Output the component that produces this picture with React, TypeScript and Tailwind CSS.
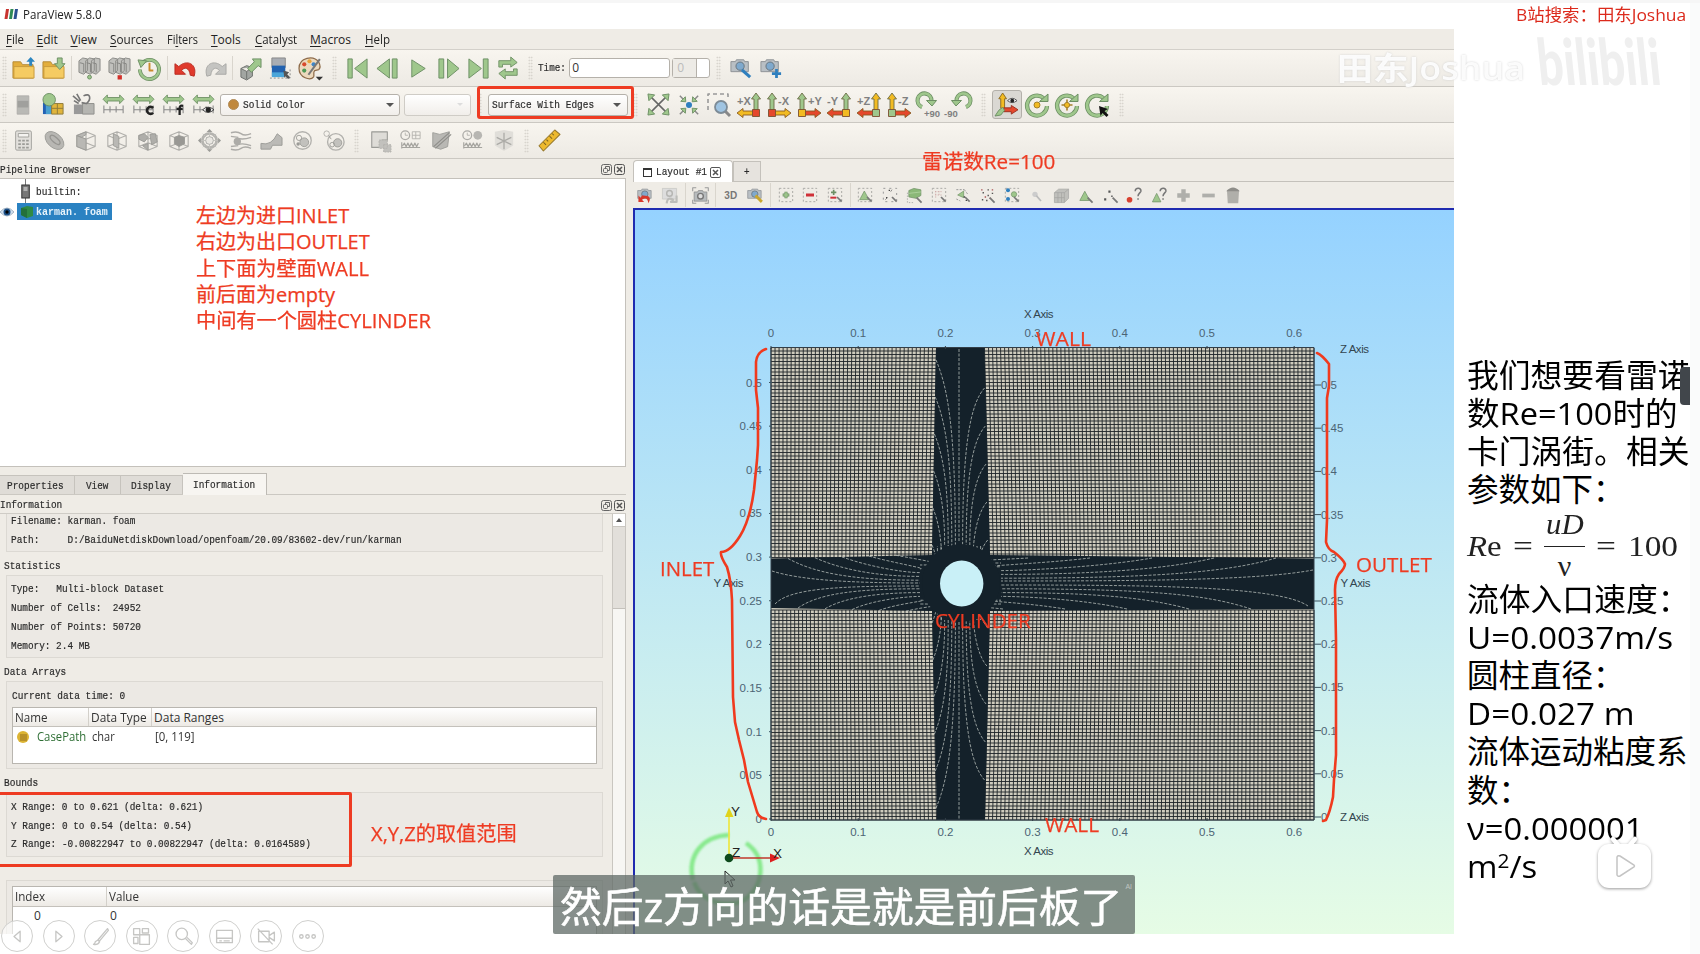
import React, { useLayoutEffect, useRef, useState } from "react";

const SANS = "font-['Open_Sans','Noto_Sans_CJK_SC',sans-serif]";
const MONO = "font-['Liberation_Mono','Noto_Sans_CJK_SC',monospace]";

/* Text squeezed or stretched horizontally to a given width. */
function Fit({ w, className = "", children }: { w: number; className?: string; children: React.ReactNode }) {
  const ref = useRef<HTMLSpanElement>(null);
  const [s, setS] = useState(1);
  useLayoutEffect(() => {
    if (ref.current) setS(w / ref.current.offsetWidth);
  }, [w]);
  return (
    <span className={"inline-block whitespace-pre " + className} style={{ width: w }}>
      <span ref={ref} className="inline-block origin-left" style={{ transform: `scaleX(${s})` }}>
        {children}
      </span>
    </span>
  );
}

function M({ children, className = "" }: { children: string; className?: string }) {
  return (
    <Fit w={children.length * 5.66} className={MONO + " text-[11.5px] leading-[14px] text-[#2a2a2a] [-webkit-text-stroke:0.2px_#2a2a2a] " + className}>
      {children}
    </Fit>
  );
}

function Ic({ children, w = "w-[30px]", s = 23 }: { children: React.ReactNode; w?: string; s?: number }) {
  return (
    <span className={"flex shrink-0 items-center justify-center " + w}>
      <svg className="overflow-visible" width={s} height={s} viewBox="0 0 24 24" fill="none" strokeLinejoin="round">
        {children}
      </svg>
    </span>
  );
}

function Grip({ w = "w-4" }: { w?: string }) {
  return (
    <span className={"flex shrink-0 items-center justify-center " + w}>
      <span className="h-6 w-[5px] bg-[radial-gradient(#d2cec7_0.7px,transparent_0.9px)] bg-[size:2.5px_3px]" />
    </span>
  );
}

function Sep({ w = "w-1.5" }: { w?: string }) {
  return (
    <span className={"flex shrink-0 justify-center " + w}>
      <span className="h-6 w-px bg-[#d9d5cd]" />
    </span>
  );
}

const G = "#9fc78c";
const GS = "#6d8f64";
const N = "#9b9b97";

const folder = (
  <>
    <path d="M1 5h8l2 3h11v14H1z" fill="#e3ae3c" stroke="#b58a35" />
    <path d="M2 10h21v12H2z" fill="#f5cb62" stroke="#c89a3c" />
  </>
);
const servers = (
  <>
    <path d="M1 4l4-3 5 1v12l-4 4-5-2zM8 4l4-3 5 1v12l-4 4-5-2zM14 4l4-3 5 1v12l-4 4-5-2z" fill="#c0c0bc" stroke="#8a8a87" />
    <path d="M2 6l4 1v9M9 6l4 1v9M15 6l4 1v9" stroke="#858582" />
  </>
);
const range = (
  <>
    <path d="M0 6l5-5v3h14V1l5 5-5 5V8H5v3z" fill={G} stroke={GS} />
    <path d="M1 13v9M8 14v7M15 14v7M23 13v9M1 18h22" stroke="#888" strokeWidth="1.2" />
  </>
);
const cube = <path d="M2 6l10-4 10 4v12l-10 4-10-4zM2 6l10 4 10-4M12 10v12M2 18l10-4 10 4M12 2v12" stroke="#b0afab" strokeWidth="1.2" />;
const camera = (
  <>
    <path d="M1 5h5l1-2h8l1 2h4v11H1z" fill="#b9bfc4" stroke="#8b8f93" />
    <circle cx="11" cy="10" r="4.5" fill="#7fa9cd" stroke="#66717a" />
  </>
);
const dash = <rect x="2" y="2" width="20" height="20" stroke="#a0a09c" strokeDasharray="3 3" strokeWidth="1.3" />;
const pick = <path d="M15 15l7 7" stroke="#777" strokeWidth="2.5" />;
const wave = <path d="M2 21V14M2 20h21M3 18l2-3 2 4 2-4 2 4 2-4 2 4 2-4 2 4 2-4" stroke="#a5a49f" strokeWidth="1.3" />;

function AxisIcon({ label, up, side, box, flip }: { label: string; up: string; side: string; box: string; flip?: boolean }) {
  return (
    <Ic s={24} w="w-[30.1px]">
      <g transform={flip ? "translate(24 0) scale(-1 1)" : undefined} strokeWidth="0.9">
        <path d="M17 17V6h-2.500L19 0l4.500 6H21v11z" fill={up} stroke="#6b6b45" />
        <path d="M17 18H6v-2.500L0 20l6 4.500V22h11z" fill={side} stroke="#8a5a20" />
        <rect x="15.500" y="16.500" width="7" height="7" fill={box} stroke="#7a5030" />
      </g>
      <text x={flip ? 11 : 0} y="12" fontSize="11" fontWeight="bold" fill="#808080" fontFamily="Liberation Sans">
        {label}
      </text>
    </Ic>
  );
}

function Rot({ c }: { c: React.ReactNode }) {
  return (
    <Ic s={24}>
      <path d="M22 13a10 10 0 1 1-3.500-8" stroke={GS} strokeWidth="4.200" />
      <path d="M22 13a10 10 0 1 1-3.500-8" stroke={G} strokeWidth="2.600" />
      <path d="M14.500 8.500l8.500 0V1z" fill={G} stroke={GS} />
      {c}
    </Ic>
  );
}

function Combo({ className = "", children }: { className?: string; children?: React.ReactNode }) {
  return (
    <div className={"flex h-[22px] shrink-0 items-center justify-between rounded-[3px] border border-[#b5b1aa] bg-linear-to-b from-white to-[#f1eeea] " + className}>
      {children}
    </div>
  );
}

const Bar = ({ h, children }: { h: string; children: React.ReactNode }) => (
  <div className={"flex shrink-0 items-center overflow-hidden border-b border-[#cbc8c2] bg-linear-to-b from-[#f8f5ef] to-[#edeae4] " + h}>{children}</div>
);

function Menu() {
  const items: [string, number, number, string][] = [
    ["File", 5.5, 18, "F"], ["Edit", 13, 21, "E"], ["View", 13, 26, "V"], ["Sources", 13, 43, "S"], ["Filters", 14, 31, "l"],
    ["Tools", 13.5, 30, "T"], ["Catalyst", 13.5, 42, "C"], ["Macros", 13.5, 41, "M"], ["Help", 13.5, 25, "H"],
  ];
  return (
    <div className={"flex h-[21px] shrink-0 items-center border-b border-[#d3d0ca] bg-[#efece6] pt-[2px] text-[12px] text-[#222] " + SANS}>
      {items.map(([t, ml, w, u]) => {
        const i = t.indexOf(u);
        return (
          <span key={t} style={{ marginLeft: ml }} className="flex">
            <Fit w={w}>
              {t.slice(0, i)}
              <span className="underline underline-offset-2">{u}</span>
              {t.slice(i + 1)}
            </Fit>
          </span>
        );
      })}
    </div>
  );
}

function ToolbarOne() {
  return (
    <Bar h="h-[37px]">
      <Grip w="w-2" />
      <Ic>{folder}<path d="M18 9V5h-3l4.500-5L24 5h-3v4z" fill="#2d86c0" /></Ic>
      <Ic>{folder}<path d="M16 1h5v6h3l-5.500 6L13 7h3z" fill={G} stroke={GS} /></Ic>
      <Sep />
      <Ic>{servers}<circle cx="12" cy="21" r="2" fill={G} stroke={GS} /></Ic>
      <Ic>{servers}<rect x="10" y="19" width="4.500" height="4.500" fill="#d2302a" /></Ic>
      <Ic><path d="M4 7a10 10 0 1 1-2 6" stroke={GS} strokeWidth="4" /><path d="M4 7a10 10 0 1 1-2 6" stroke={G} strokeWidth="2.500" /><path d="M0 3l9 1-6 7z" fill={G} stroke={GS} /><path d="M12 6v8h4" stroke="#c98b2b" strokeWidth="2" /></Ic>
      <Sep />
      <Ic><path d="M1 7v11h11l-4-4c3-4 8-3 9 5l4 1C25 7 13 2 5 10z" fill="#e03a2c" stroke="#b92a20" /></Ic>
      <Ic><path d="M23 7v11H12l4-4c-3-4-8-3-9 5l-4 1C-1 7 11 2 19 10z" fill="#c4c4c1" stroke="#a8a8a5" /></Ic>
      <Sep w="w-[5px]" />
      <Ic><path d="M2 12l6-3 6 2v9l-6 4-6-3zM2 12l6 3 6-4M8 15v8" fill="#a2a6a2" stroke="#6d706d" /><path d="M9 12l7-7-2-3h9v9l-3-2-7 7z" fill={G} stroke={GS} /></Ic>
      <Ic><rect x="3" y="1" width="14" height="10" fill="#a9adb3" stroke="#888" /><rect x="3" y="9" width="14" height="11" fill="#2262b0" /><rect x="3" y="16" width="14" height="5" fill="#4aa5d9" /><path d="M1 22h21V11" stroke="#888" strokeDasharray="2 2" /><path d="M15 14l6 2-2 2 3 3-2 2-3-3-1 2z" fill="#555" /></Ic>
      <Ic w="w-[31px]" s={25}><path d="M20 6C15-1 1 1 1 12c0 9 11 12 14 8 1-2-1-4 1-6l4-1c2-2 1-5 0-7z" fill="#ecd9bd" stroke="#8d6a48" strokeWidth="1.200" /><circle cx="6" cy="8" r="2" fill="#d84a2c" /><circle cx="11" cy="5" r="2" fill="#e7a33a" /><circle cx="15" cy="8" r="2" fill="#3f86c6" /><circle cx="6" cy="14" r="2" fill="#4f9a57" /><path d="M21 3L10 18" stroke="#777" strokeWidth="2" /><path d="M17 20h7l-3.500 3.500z" fill="#333" /></Ic>
      <Grip w="w-[16px]" />
      <Ic><path d="M2 2h4.500v20H2zM22 2v20L9 12z" fill={G} stroke={GS} /></Ic>
      <Ic w="w-[31px]"><path d="M14 2v20L1 12zM17 2h5v20h-5z" fill={G} stroke={GS} /></Ic>
      <Ic><path d="M5 3v18l14-9z" fill={G} stroke={GS} /></Ic>
      <Ic><path d="M2 2h5v20H2zM11 2v20l12-10z" fill={G} stroke={GS} /></Ic>
      <Ic><path d="M2 2v20l13-10zM17 2h5v20h-5z" fill={G} stroke={GS} /></Ic>
      <Ic s={22}><path d="M2 11V4h13V0l7 6-7 5V8H6v3zM22 13v7H9v4l-7-6 7-5v3h9v-3z" fill={G} stroke={GS} /></Ic>
      <Grip w="w-[15px]" />
      <M>Time:</M>
      <div className={"ml-[3px] flex h-5 w-[101px] items-center rounded-[3px] border border-[#b5b1aa] bg-white pl-0.5 text-[12px] text-[#333] " + SANS}>0</div>
      <div className={"ml-0.5 flex h-5 w-[38px] items-center rounded-[3px] border border-[#b5b1aa] bg-white text-[12px] text-[#bbb] " + SANS}>
        <span className="flex h-full w-6 items-center border-r border-[#b5b1aa] bg-[#edebe6] pl-1">0</span>
      </div>
      <Grip w="w-[16px]" />
      <Ic s={22}>{camera}<path d="M13 14l9 8" stroke="#2f7fbe" strokeWidth="3.500" /></Ic>
      <Ic s={22}>{camera}<path d="M18 13v10M13 18h10" stroke="#2f7fbe" strokeWidth="3" /></Ic>
    </Bar>
  );
}

function ToolbarTwo() {
  const Y = "#f2bb22", R = "#e5482c";
  return (
    <Bar h="h-[36px]">
      <Grip w="w-2" />
      <Ic s={20}><rect x="5" y="1" width="14" height="22" fill="#b9b9b5" stroke="#acaba7" /><path d="M5.500 7h13v8h-13z" fill="#a0a09d" /></Ic>
      <Ic><path d="M1 10h9v12H1z" fill="#2361b4" /><path d="M4 12h6v10H4z" fill="#4aa0cf" /><path d="M10 11h12v11H10z" fill="#e0b43c" stroke="#8f7a3a" /><path d="M10 16h12M16 11v11" stroke="#8f7a3a" /><circle cx="7.500" cy="7" r="6.500" fill={G} stroke={GS} /></Ic>
      <Ic><path d="M2 12h9v10H2z" fill="#999" /><path d="M11 11h12v11H11z" fill="#b5b5b1" stroke="#8f8f8b" /><path d="M1 3l7 6M5 1l4 7M12 3c8-4 8 4 3 8l-5-1M2 8l5 3" stroke="#777" strokeWidth="1.700" /></Ic>
      <Ic s={21}>{range}</Ic>
      <Ic s={21}>{range}<path d="M23 16a4 4 0 1 0 0 5.500" stroke="#222" strokeWidth="3" /></Ic>
      <Ic s={21}>{range}<path d="M23 13.500c-3.500-1-4 1-4 3v7.500M15.500 17h7" stroke="#222" strokeWidth="2.600" /></Ic>
      <Ic s={21}>{range}<path d="M11 18q6-6 13 0-7 6-13 0z" fill="#eee" stroke="#333" /><circle cx="17.500" cy="18" r="3" fill="#222" /></Ic>
      <Combo className="ml-[1.500px] w-[180px] pr-[5px] pl-[7px]">
        <span className="flex items-center gap-1">
          <span className="size-[11px] rounded-full border border-[#b08b58] bg-[#c0883c]" />
          <M>Solid Color</M>
        </span>
        <span className="border-x-4 border-t-4 border-x-transparent border-t-[#555]" />
      </Combo>
      <Combo className="ml-1 w-[67px] justify-end border-[#cfccc6] pr-[7px]">
        <span className="ml-auto border-x-[3px] border-t-[3px] border-x-transparent border-t-[#ddd]" />
      </Combo>
      <Grip w="w-[17px]" />
      <Combo className="w-[140px] pr-[6px] pl-[3px]">
        <M>Surface With Edges</M>
        <span className="border-x-4 border-t-4 border-x-transparent border-t-[#555]" />
      </Combo>
      <Grip w="w-[16px]" />
      <Ic s={23} w="w-[30.1px]"><path d="M3 3l18 18M21 3L3 21" stroke="#666" strokeWidth="1.600" /><path d="M1 1l7 1-6 6zM23 1l-7 1 6 6zM1 23l7-1-6-6zM23 23l-7-1 6-6z" fill={G} stroke={GS} /></Ic>
      <Ic s={22} w="w-[30.1px]"><path d="M2 2l4 4M22 2l-4 4M2 22l4-4M22 22l-4-4" stroke="#888" strokeWidth="1.600" /><path d="M8.500 8.500L3 8l5-5zM15.500 8.500l5.500-.5-5-5zM8.500 15.500L3 16l5 5zM15.500 15.500l5.500.5-5 5z" fill={G} stroke={GS} /><circle cx="12" cy="12" r="3.300" fill="#2f7fc0" /></Ic>
      <Ic s={24} w="w-[30.1px]"><path d="M1 17V1h20v6" stroke="#999" strokeDasharray="4 3" strokeWidth="1.600" /><path d="M18 18l5 5" stroke="#888" strokeWidth="3" /><circle cx="14" cy="14" r="6" fill="#9fc4e2" stroke="#7d8b96" strokeWidth="1.800" /></Ic>
      <AxisIcon label="+X" up={G} side={Y} box={R} />
      <AxisIcon label="-X" up={G} side={Y} box={R} flip />
      <AxisIcon label="+Y" up={G} side={R} box={Y} flip />
      <AxisIcon label="-Y" up={G} side={R} box={Y} />
      <AxisIcon label="+Z" up={Y} side={R} box={G} />
      <AxisIcon label="-Z" up={Y} side={R} box={G} flip />
      {[["+90", false], ["-90", true]].map(([t, f]) => (
        <Ic key={String(t)} s={24} w="w-[30.1px]">
          <g transform={f ? "translate(26 0) scale(-1 1)" : "translate(-2 0)"}>
            <path d="M7 14A7 7 0 1 1 16.500 8" stroke={GS} strokeWidth="4.200" />
            <path d="M7 14A7 7 0 1 1 16.500 8" stroke={G} strokeWidth="2.600" />
            <path d="M11.500 7.500h10L17 13z" fill={G} stroke={GS} />
          </g>
          <text x={f ? -3 : 7} y="24" fontSize="9.500" fontWeight="bold" fill="#808080" fontFamily="Liberation Sans">{t}</text>
        </Ic>
      ))}
      <Grip w="w-[17px]" />
      <span className="flex h-[29px] rounded-[3px] border border-[#b3b0aa] bg-[#dad8d3]">
        <Ic w="w-[28px]"><path d="M6 16V6H4l4-6 4 6h-2v10z" fill={Y} stroke="#8a6a20" /><path d="M9 15.500h8V13l7 4.500-7 4.500v-2.500H9z" fill={R} stroke="#9c3020" /><path d="M8 15l-4 3-4 6 6-1 4-5z" fill={G} stroke={GS} /><path d="M13 8q5-5 10 0-5 4-10 0z" fill="#eee" stroke="#555" /><circle cx="18" cy="8" r="2" fill="#222" /></Ic>
      </span>
      <Rot c={<circle cx="12" cy="12" r="3" fill={Y} stroke="#a5802a" />} />
      <Rot c={<><path d="M12 6.500v11M6.500 12h11" stroke="#a5802a" strokeWidth="1.600" /><circle cx="12" cy="12" r="2.600" fill={Y} stroke="#a5802a" /></>} />
      <Rot c={<path d="M14 13l9 3-3.500 2 4 4-2 2-4-4-2 3z" fill="#111" />} />
      <Grip w="w-[19px]" />
    </Bar>
  );
}

function ToolbarThree() {
  const w = "w-[31px]";
  return (
    <Bar h="h-[36px]">
      <Grip w="w-2" />
      <Ic w={w} s={21}><rect x="3" y="1" width="18" height="22" rx="1.500" fill="#e2e0dc" stroke={N} /><path d="M6 4h12v4H6z" fill="#f4f3f0" stroke={N} /><path d="M6 11h3v2H6zM10.500 11h3v2h-3zM15 11h3v2h-3zM6 15h3v2H6zM10.500 15h3v2h-3zM15 15h3v2h-3zM6 19h3v2H6zM10.500 19h3v2h-3zM15 19h3v2h-3z" fill={N} /></Ic>
      <Ic w={w} s={21}><ellipse cx="12" cy="12" rx="12.500" ry="8" transform="rotate(42 12 12)" fill="#b8b7b3" stroke={N} /><ellipse cx="12" cy="11" rx="7" ry="3" transform="rotate(42 12 12)" stroke="#969591" strokeWidth="1.500" /></Ic>
      <Ic w={w} s={22}>{cube}<path d="M2 6l10 4v12L2 18zM2 6l10-4v3l-5 3z" fill="#b9b8b4" stroke={N} /></Ic>
      <Ic w={w} s={22}>{cube}<path d="M8 4l6 3v13l-6-3z" fill="#b9b8b4" stroke={N} /></Ic>
      <Ic w={w} s={22}>{cube}<path d="M2 6l6-2 4 4-4 5-6-3zM14 5l6-1 2 9-6 3zM6 17l6-2v7z" fill="#afaeaa" stroke={N} /></Ic>
      <Ic w={w} s={22}>{cube}<path d="M7 8l5-2 6 2v7l-6 3-5-3z" fill="#999894" stroke={N} /></Ic>
      <Ic w={w} s={23}><circle cx="12" cy="12" r="7.500" stroke="#b5b4b0" strokeWidth="3" /><path d="M12 1v22M1 12h22M5 5l14 14M19 5L5 19" stroke="#c2c1bd" /><path d="M12 0l3 3h-6zM12 24l3-3h-6zM0 12l3 3v-6zM24 12l-3 3v-6z" fill={N} /><circle cx="12" cy="12" r="4" fill="#e9e7e2" stroke="#b0b0ac" /></Ic>
      <Ic w={w} s={22}><path d="M1 3q7-2 11 1t11 0M1 21q7 2 11-1t11 0M8 9q6 2 15-1M8 16q6-2 15 1M1 7l8 1M1 18l8-1" stroke="#acaba7" strokeWidth="1.500" /><circle cx="8" cy="12.500" r="4" fill="#acaba7" /></Ic>
      <Ic w={w}><path d="M1 15q11 3 17-10l5 4v8H13l-2 4H1z" fill="#bbbab6" stroke={N} /></Ic>
      <Ic w={w} s={21}><circle cx="12" cy="12" r="10" stroke="#b2b1ad" strokeWidth="1.500" /><circle cx="14" cy="14" r="5" fill="#c2c1bd" stroke={N} /><circle cx="8" cy="9" r="3" stroke={N} /><circle cx="7" cy="16" r="2" fill={N} /></Ic>
      <Ic w={w} s={22}><circle cx="14" cy="13" r="9" stroke="#b2b1ad" strokeWidth="1.500" /><circle cx="16" cy="14" r="4.500" fill="#c2c1bd" stroke={N} /><circle cx="10" cy="16" r="2.500" stroke={N} /><circle cx="4" cy="4" r="3" stroke="#b2b1ad" /><path d="M6 6l3 4" stroke={N} /></Ic>
      <Grip w="w-[15px]" />
      <Ic w={w} s={22}><path d="M3 2h17v9h-6v8H3z" fill="#dedcd7" stroke={N} strokeWidth="1.200" /><path d="M11 11h9v9h-9zM16 16h8v8h-8z" fill="#c2c1bd" stroke="#b2b1ad" strokeDasharray="2 1" /></Ic>
      <Ic w={w} s={21}><circle cx="6" cy="6" r="5" stroke="#acaba7" strokeWidth="1.500" /><path d="M6 3v3h3M14 2h9v8h-9zM18 2v8M14 6h9" stroke="#b2b1ad" />{wave}</Ic>
      <Ic w={w} s={21}><path d="M2 3l8 2 11-3-2 17-8 3-9-3z" fill="#b9b8b4" stroke={N} /><path d="M3 19L21 3M5 21L23 5" stroke="#8f8e8a" strokeWidth="1.500" /></Ic>
      <Ic w={w} s={21}><circle cx="6" cy="6" r="5" stroke="#acaba7" strokeWidth="1.500" /><path d="M6 3v3h3" stroke="#b2b1ad" /><circle cx="18" cy="6" r="5" fill="#b7b6b2" />{wave}</Ic>
      <Ic w={w} s={22}><path d="M2 2l10-2 10 2v15l-10 6-10-6z" fill="#e0ded9" /><path d="M12 3v18M4 8l16 8M20 8L4 16" stroke="#acaba7" strokeWidth="1.400" /></Ic>
      <Grip w="w-[15px]" />
      <Ic w={w} s={21}><path d="M0 18L18 0l6 5L5 24z" fill="#edb92e" stroke="#96782c" strokeWidth="1.200" /><path d="M5 14l3 3M8.500 11l2 2M12 7l3 3M15 4l2 2" stroke="#7b6222" strokeWidth="1.200" /></Ic>
    </Bar>
  );
}

function DockButtons({ pr = "pr-2" }: { pr?: string }) {
  return (
    <span className={"ml-auto flex gap-[2px] " + pr}>
      <svg width="11" height="11" viewBox="0 0 11 11" fill="none" stroke="#666"><rect x=".5" y=".5" width="10" height="10" rx="2" /><rect x="2.500" y="4.500" width="4" height="4" rx="1" /><path d="M4.500 4V2.500h4v4H7" /></svg>
      <svg width="11" height="11" viewBox="0 0 11 11" fill="none" stroke="#555"><rect x=".5" y=".5" width="10" height="10" rx="2" /><path d="M3 3l5 5M8 3L3 8" strokeWidth="1.500" /></svg>
    </span>
  );
}

const groupBox = "shrink-0 border border-[#dcd9d3] bg-[#ece9e4]";

function LeftDock() {
  return (
    <div className="flex w-[633px] shrink-0 flex-col bg-[#efece6]">
      <div className="flex h-[19px] shrink-0 items-center pt-[2px]">
        <M>Pipeline Browser</M>
        <DockButtons />
      </div>
      <div className="flex h-[289px] w-[626px] shrink-0 flex-col border-y border-r border-[#c4c1bb] bg-white">
        <div className="flex h-[25px] items-center pl-[21px]">
          <svg width="10" height="25" viewBox="0 0 10 25" fill="none"><path d="M4.500 0v6M4.500 19v6" stroke="#777" /><rect x=".8" y="6" width="7.500" height="13" fill="#777" stroke="#333" /><path d="M2.500 9h4M2.500 11h4" stroke="#eee" /></svg>
          <M className="ml-[5px]">builtin:</M>
        </div>
        <div className="-mt-px flex h-[17px] items-center">
          <svg width="14" height="12" viewBox="0 0 14 12"><path d="M0 6q7-8 14 0-7 8-14 0z" fill="#cfe0f0" stroke="#a5b4c3" /><circle cx="7" cy="6" r="3.500" fill="#1a4e86" /><circle cx="7" cy="6" r="1.700" fill="#000" /></svg>
          <div className="ml-[3px] flex h-[17px] w-[95px] items-center bg-[#2a82c2] pl-1">
            <svg width="12" height="13" viewBox="0 0 12 13"><path d="M0 3l6-2 6 1v9l-6 2-6-3z" fill="#2f8a45" /><path d="M6 4v9l-6-3V3z" fill="#23703a" /></svg>
            <Fit w={72} className={"ml-[3px] font-bold leading-[14px] text-[#e6f2fa] text-[11.5px] " + MONO}>karman. foam</Fit>
          </div>
        </div>
      </div>
      <div className="flex h-[28px] w-[626px] shrink-0 items-end border-b border-[#cbc8c2] pt-1.5">
        {[["Properties", "w-[75px] pl-[7px]"], ["View", "w-[45.500px] pl-[11px]"], ["Display", "w-[62px] pl-[10px]"]].map(([t, c]) => (
          <div key={t} className={"flex h-[19px] items-center border-t border-r border-[#c6c3bd] bg-[#dfdcd7] pt-px " + c}><M>{t}</M></div>
        ))}
        <div className="-mb-px flex h-[22px] w-[84px] items-center border-t border-r border-[#bdbab4] bg-[#f7f5f1] pl-[10px]"><M>Information</M></div>
      </div>
      <div className="flex h-[19px] w-[626px] shrink-0 items-center border-b border-[#cfccc6] pt-[2px]"><M>Information</M><DockButtons pr="pr-px" /></div>
      <div className="flex min-h-0 flex-1">
        <div className="flex w-[612px] flex-col overflow-hidden px-[6px]">
          <div className={groupBox + " flex h-[38px] w-[597px] flex-col border-t-0 pl-1"}>
            <div className="flex h-[14px] items-center"><M>Filename: karman. foam</M></div>
            <div className="mt-[3px] flex h-[17px] items-center"><M>{"Path:     D:/BaiduNetdiskDownload/openfoam/20.09/83602-dev/run/karman"}</M></div>
          </div>
          <div className="-ml-[2px] flex h-[23px] shrink-0 items-center pt-1"><M>Statistics</M></div>
          <div className={groupBox + " flex h-[83px] w-[597px] flex-col pt-[4px] pl-1"}>
            {["Type:   Multi-block Dataset", "Number of Cells:  24952", "Number of Points: 50720", "Memory: 2.4 MB"].map((t) => (
              <div key={t} className="flex h-[18.800px] items-center"><M>{t}</M></div>
            ))}
          </div>
          <div className="-ml-[2px] flex h-[23px] shrink-0 items-center pt-1"><M>Data Arrays</M></div>
          <div className={groupBox + " flex h-[88px] w-[597px] flex-col pl-[5px]"}>
            <div className="flex h-[25px] items-center pt-[3px]"><M>Current data time: 0</M></div>
            <div className={"h-[57px] w-[585px] border border-[#b9b6b0] bg-white text-[12px] text-[#333] " + SANS}>
              <div className="flex h-[19px] items-center border-b border-[#c4c1bb] bg-linear-to-b from-white to-[#edeae5]">
                <span className="flex h-full w-[76px] items-center border-r border-[#d3d0ca] pt-px pl-0.5"><Fit w={33}>Name</Fit></span>
                <span className="flex h-full w-[63px] items-center border-r border-[#d3d0ca] pt-px pl-0.5"><Fit w={55.5}>Data Type</Fit></span>
                <span className="pt-px pl-0.5"><Fit w={70}>Data Ranges</Fit></span>
              </div>
              <div className="flex h-[20px] items-center">
                <span className="ml-[4px] flex size-[12px] items-center justify-center rounded-full bg-[#dcb434]"><span className="size-[7px] bg-[#b8912a]" /></span>
                <Fit w={49} className="ml-2 text-[#2f6f35]">CasePath</Fit>
                <Fit w={23} className="ml-[6px]">char</Fit>
                <Fit w={40} className="ml-10">[0, 119]</Fit>
              </div>
            </div>
          </div>
          <div className="-ml-[2px] flex h-[23px] shrink-0 items-center pt-1"><M>Bounds</M></div>
          <div className={groupBox + " flex h-[65px] w-[597px] flex-col pt-[4px] pl-1"}>
            {["X Range: 0 to 0.621 (delta: 0.621)", "Y Range: 0 to 0.54 (delta: 0.54)", "Z Range: -0.00822947 to 0.00822947 (delta: 0.0164589)"].map((t) => (
              <div key={t} className="flex h-[18.800px] items-center pt-px"><M>{t}</M></div>
            ))}
          </div>
          <div className={groupBox + " mt-[23px] h-[60px] w-[597px] border-b-0 pt-[5px] pl-[5px]"}>
            <div className={"h-[60px] w-[585px] border border-[#b9b6b0] bg-white text-[12px] text-[#333] " + SANS}>
              <div className="flex h-[20px] items-center border-b border-[#c4c1bb] bg-linear-to-b from-white to-[#edeae5]">
                <span className="flex h-full w-[94px] items-center border-r border-[#d3d0ca] pt-px pl-0.5"><Fit w={30}>Index</Fit></span>
                <span className="pt-px pl-0.5"><Fit w={30}>Value</Fit></span>
              </div>
              <div className="flex"><span className="w-[97px] pl-[21px]">0</span><span>0</span></div>
            </div>
          </div>
        </div>
        <div className="flex w-[14px] flex-col border-x border-[#c9c6c0] bg-[#f7f6f3]">
          <span className="flex h-[13px] items-center justify-center border-b border-[#c9c6c0] bg-white"><span className="border-x-[3px] border-b-4 border-x-transparent border-b-[#555]" /></span>
          <span className="h-[82px] border-b border-[#c4c1bb] bg-[#e2dfda]" />
        </div>
      </div>
    </div>
  );
}

function ViewTools() {
  const w = "w-[24.5px]";
  const tri = <path d="M11 6l7 13H4z" fill={G} stroke={GS} />;
  const dots = <path d="M5 7h2v2H5zM12 3h2v2h-2zM4 17h2v2H4zM12 11h2v2h-2zM18 8h2v2h-2zM10 18h2v2h-2z" fill="#555" />;
  return (
    <div className="flex h-[26px] shrink-0 items-center bg-[#efece6]">
      <Ic w={w} s={17}>{camera}<path d="M2 12v9h8l-3-3q8-5 9 5 7-12-9-11l-2 3z" fill="#d8382c" /></Ic>
      <Ic w={w} s={17}><path d="M2 2h20v15H2z" fill="#ddd" stroke="#c5c5c2" /><circle cx="12" cy="9" r="4" stroke="#b5b5b2" strokeWidth="2" /><path d="M22 12v9h-8l3-3q-8-5-9 5" stroke="#bdbdba" strokeWidth="3" /></Ic>
      <Sep />
      <Ic w={w} s={17}><path d="M1 6V1h5M18 1h5v5M23 18v5h-5M6 23H1v-5" stroke="#999" strokeWidth="1.500" /><path d="M3 7h5l1-2h6l1 2h5v13H3z" fill="#b7bbbd" stroke="#888" /><circle cx="12" cy="13" r="4" fill="#ddd" stroke="#777" strokeWidth="2" /></Ic>
      <Sep />
      <span className={"flex shrink-0 justify-center font-['Liberation_Sans',sans-serif] text-[10px] font-bold text-[#777] " + w}>3D</span>
      <Ic w={w} s={17}>{camera}<path d="M12 12l9 9" stroke="#c9a62e" strokeWidth="4" /></Ic>
      <Sep />
      <Ic w={w} s={16}>{dash}<path d="M12 7v10M7 12h10" stroke={GS} strokeWidth="4.500" /><path d="M12 8v8M8 12h8" stroke={G} strokeWidth="2.500" /></Ic>
      <Ic w={w} s={16}>{dash}<path d="M6 12h12" stroke="#cf3038" strokeWidth="4.500" /></Ic>
      <Ic w={w} s={16}>{dash}<path d="M10 4v8M6 8h8" stroke={GS} strokeWidth="2.500" /><path d="M5 16h9" stroke="#cf3038" strokeWidth="3" />{pick}</Ic>
      <Sep />
      <Ic w={w} s={16}>{dash}{tri}{pick}</Ic>
      <Ic w={w} s={16}><rect x="2" y="2" width="20" height="20" stroke="#999" strokeDasharray="3 6" strokeWidth="1.500" /><path d="M10 4h2v2h-2zM6 15h2v2H6z" fill="#444" /><path d="M13 7l2-3M5 19l3-3" stroke="#555" />{pick}</Ic>
      <Ic w={w} s={17}><path d="M4 5l7-3 10 2v8l-7 4-10-2z" fill="#8bb878" stroke={GS} /><path d="M4 9l17-2" stroke="#b7d8a7" /><path d="M2 8v14h8" stroke="#999" strokeDasharray="2 2" />{pick}</Ic>
      <Ic w={w} s={16}>{dash}<path d="M6 7h12M6 12h12M7 6v12M12 6v8" stroke="#c79b9b" strokeDasharray="2 2" />{pick}</Ic>
      <Ic w={w} s={16}><path d="M2 4h12M2 18l6 3M14 4l6 8" stroke="#999" strokeDasharray="3 2" strokeWidth="1.500" /><path d="M4 12l9-6v10z" fill={G} stroke={GS} /><path d="M13 14h2v2h-2zM16 19h2v2h-2z" fill="#444" />{pick}</Ic>
      <Ic w={w} s={17}>{dots}<path d="M8 13h2v2H8zM15 15h2v2h-2zM3 3h2v2H3zM18 3h2v2h-2z" fill="#a55" />{pick}</Ic>
      <Ic w={w} s={16}>{dash}<circle cx="6" cy="5" r="3" fill="#2f7fbe" /><circle cx="6" cy="18" r="3" fill="#2f7fbe" /><circle cx="15" cy="11" r="4" fill={G} stroke={GS} />{pick}</Ic>
      <Ic w={w} s={16}><circle cx="9" cy="11" r="4" fill="#ccc" /><path d="M11 13l7 8" stroke="#bbb" strokeWidth="2.500" /></Ic>
      <Ic w={w} s={17}><path d="M2 8l6-5h14v13l-6 6H2zM2 8h14v14M16 8l6-5M7 8v14M12 8v14M2 15h14" fill="#c0c0bc" stroke="#a5a5a2" /></Ic>
      <Ic w={w} s={17}>{tri}{pick}</Ic>
      <Ic w={w} s={17}><path d="M9 5h3v3H9zM3 16h3v3H3zM13 12h2v2h-2z" fill="#555" />{pick}</Ic>
      {[0, 1].map((k) => (
        <Ic key={k} w={w} s={17}>
          {k ? <path d="M8 9l6 12H2z" fill={G} stroke={GS} /> : <circle cx="5" cy="18" r="4" fill="#d8412f" />}
          <path d="M13 6c0-6 9-5 8 0-1 3-4 3-4 7M17 16v2" stroke="#777" strokeWidth="2.200" />
        </Ic>
      ))}
      <Ic w={w} s={15}><path d="M12 2v20M2 12h20" stroke="#afafab" strokeWidth="7" /></Ic>
      <Ic w={w} s={15}><path d="M2 12h20" stroke="#afafab" strokeWidth="6" /></Ic>
      <Ic w={w} s={18}><path d="M4 6h16l-1 17H5z" fill="#b0afaa" /><path d="M3 7q9-10 18 0z" fill="#8e8d89" /></Ic>
    </div>
  );
}

/* Mesh geometry in window pixels; OX/OY is where the render area's content starts. */
const OX = 635, OY = 210;
const lerp = (a: number, b: number, t: number) => a + (b - a) * t;

function columns(x0: number, x1: number, xi0: number, xi1: number, y0: number, y1: number, n: number) {
  let d = "";
  for (let i = 0; i <= n; i++) d += `M${lerp(x0, x1, i / n).toFixed(2)} ${y0}L${lerp(xi0, xi1, i / n).toFixed(2)} ${y1}`;
  return d;
}

function rows(y0: number, y1: number, n: number) {
  let d = "";
  for (let j = 0; j <= n; j++) {
    const y = lerp(y0, y1, j / n).toFixed(2);
    d += `M771 ${y}H1314`;
  }
  return d;
}

function flowCurves() {
  let d = "M959 349V542M959 622V819";
  for (let k = 0; k < 6; k++) {
    const o = 3.6 * (k + 1);
    const yl = 360 + k * 37, yr = 388 + k * 38;
    const xe = 936 - k * 0.8, xr = 984.5 + k * 0.8;
    d += `M${xe} ${yl}C${xe + 12} ${yl + 28} ${959 - o} ${yl + 70} ${959 - o} 546`;
    d += `M${xr} ${yr}C${xr - 14} ${yr + 16} ${959 + o} ${yr + 55} ${959 + o} 546`;
    const bl = 808 - k * 37, br = 780 - k * 38;
    d += `M${xe} ${bl}C${xe + 12} ${bl - 28} ${959 - o} ${bl - 70} ${959 - o} 620`;
    d += `M${xr} ${br}C${xr - 14} ${br - 16} ${959 + o} ${br - 55} ${959 + o} 620`;
  }
  for (let k = 0; k < 5; k++) {
    const o = 3.8 * (k + 1);
    const xl = 788 + k * 27;
    d += `M${xl} ${558.5 - k * 0.8}C${xl + 25} ${572 - k * 3} ${xl + 60} ${584 - o} 920 ${584 - o}`;
    d += `M${xl + 10} ${608 + k * 0.8}C${xl + 30} ${594 + k * 3} ${xl + 65} ${585 + o} 920 ${585 + o}`;
    const xr = 1276 - k * 62;
    d += `M${xr} 558C${xr - 50} ${573 - k * 3} ${xr - 130} ${582 - o} 1001 ${582 - o}`;
    d += `M${xr - 25} 609C${xr - 70} ${594 + k * 2.5} ${xr - 130} ${585 + o} 1001 ${585 + o}`;
  }
  d += "M772 571C800 580 850 583 920 583M775 604C790 588 840 586 920 586M1313 570C1260 580 1150 581 1001 581M1308 606C1280 586 1150 585 1001 585";
  return d;
}

function Scene() {
  const cols =
    columns(771, 936.5, 771, 932.5, 348, 557, 41) +
    columns(984.5, 1314, 989.5, 1314, 348, 557, 82) +
    columns(771, 936.5, 771, 932.5, 820, 610, 41) +
    columns(984.5, 1314, 989.5, 1314, 820, 610, 82);
  const yl = ["0.5", "0.45", "0.4", "0.35", "0.3", "0.25", "0.2", "0.15", "0.1", "0.05", "0"];
  return (
    <svg className="absolute inset-0" width="819" height="724" viewBox={`${OX} ${OY} 819 724`} fill="none">
      <rect x="771" y="347.500" width="543" height="472.500" fill="#cfccbe" />
      <path d={rows(347.5, 820, 135)} stroke="#1d2428" strokeWidth="1" opacity="0.9" />
      <path d={cols} stroke="#1d2428" strokeWidth="1" opacity="0.9" />
      <path d="M936 347.500H984.500L990 555L1314 558.500V609L990 611L985 820H937L932 611L771 608V558.500L932 555Z" fill="#14212a" />
      <path d={flowCurves()} stroke="#c5cbc6" strokeWidth="0.900" strokeDasharray="3 1.500" opacity="0.800" />
      <circle cx="961" cy="583" r="39" fill="#14212a" />
      <ellipse cx="961.700" cy="583.500" rx="21.700" ry="23" fill="#c9f0f7" />
      <path d="M771 347.500H1314V820H771Z" stroke="#333f48" strokeWidth="1" />
      <g fontFamily="Liberation Sans" fontSize="11.500" fill="#4c6474">
        {[0, 1, 2, 3, 4, 5, 6].map((k) => (
          <g key={k} textAnchor="middle">
            <text x={771 + 87.2 * k} y="337">{k ? `0.${k}` : "0"}</text>
            <text x={771 + 87.2 * k} y="836">{k ? `0.${k}` : "0"}</text>
            <path d={`M${771 + 87.2 * k} 346v3M${771 + 87.2 * k} 818v3`} stroke="#333f48" />
          </g>
        ))}
        {yl.map((t, k) => (
          <g key={t}>
            <text x="762" y={386.5 + 43.65 * k} textAnchor="end">{t}</text>
            <text x="1321" y={389 + 43.2 * k}>{t}</text>
            <path d={`M769 ${382.5 + 43.65 * k}h3M1314 ${385 + 43.2 * k}h7`} stroke="#3c5460" />
          </g>
        ))}
        <g fill="#33454f">
          <text x="1024" y="318" textLength="29.500">X Axis</text>
          <text x="1024" y="855" textLength="29.500">X Axis</text>
          <text x="713.500" y="587" textLength="30">Y Axis</text>
          <text x="1340.500" y="587" textLength="30">Y Axis</text>
          <text x="1340" y="353" textLength="29">Z Axis</text>
          <text x="1340" y="821" textLength="29">Z Axis</text>
        </g>
      </g>
      <path d="M693 880C687 855 703 836 729 835M746 843C768 858 763 888 744 900C724 910 700 900 694 882" stroke="#7fe884" strokeWidth="4.500" opacity="0.900" className="blur-[1px]" />
      <path d="M729 858V816" stroke="#efe52c" strokeWidth="1.500" />
      <path d="M725 817L729 807.500L733.500 817Z" fill="#e0d31a" />
      <path d="M729 858H771" stroke="#c0392b" strokeWidth="1.500" />
      <path d="M770 853.500L780 858L770 862.500Z" fill="#dd1f1f" />
      <circle cx="729" cy="858" r="4.300" fill="#0d4a1c" />
      <g fontFamily="Liberation Sans" fontSize="13.500" fill="#222">
        <text x="731" y="816">Y</text>
        <text x="732" y="857">Z</text>
        <text x="773" y="858">X</text>
      </g>
      <path d="M725 871V884L728 881L731 887L733 886L730.500 880H735Z" fill="#d8efe0" stroke="#222" />
      <g stroke="#f03a1e" strokeWidth="2.600" strokeLinejoin="round" strokeLinecap="round">
        <path d="M766 349Q757 352 756 362V390L758 408V445L757 460L754 490Q750 520 740 536T721 552Q720 556 727 567Q731 580 732 600L733 697L735 722L739 740L744 760L748 782L757 812Q759 818 766 819" />
        <path d="M1317 353Q1322 355 1329 364V386L1327 398V520L1326 542Q1328 550 1334 552Q1343 559 1345 564Q1345 568 1339 574Q1335 580 1335 590L1336 640V755L1334 780L1333 797Q1330 812 1326 820L1323 821" />
      </g>
    </svg>
  );
}

/* Red label laid over the slide, centred vertically on its top offset. */
function Note({ pos, w, children }: { pos: string; w: number; children: string }) {
  return (
    <div className={"absolute flex h-7 -translate-y-1/2 items-center text-[20px] leading-none text-[#ee3b22] [-webkit-text-stroke:0.25px_#ee3b22] " + SANS + " " + pos}>
      <Fit w={w}>{children}</Fit>
    </div>
  );
}

function Controls() {
  const icons = [
    <path d="M15 6v12L8 12z" />,
    <path d="M9 6v12l7-6z" />,
    <path d="M20 3l1 2L11 17l-2-1zM9 16l2 2q-2 4-7 3 2-1 2-3z" />,
    <path d="M3 3h7v7H3zM13 3h7v5h-7zM3 13h5v7H3zM10 10h11v11H10z" />,
    <><circle cx="10" cy="9" r="6.5" /><path d="M14 14l7 7 1-2-6-6" /></>,
    <path d="M3 5h18v14H3zM3 14h18M6 17h3M11 17h7" />,
    <path d="M3 6h12v12H3zM15 11l6-4v10l-6-4M2 3l17 18" />,
    <><circle cx="5" cy="12" r="2" /><circle cx="12" cy="12" r="2" /><circle cx="19" cy="12" r="2" /></>,
  ];
  return (
    <div className="absolute top-[920px] left-[1px] flex gap-[9.500px]">
      {icons.map((c, i) => (
        <span key={i} className="flex size-[32px] items-center justify-center rounded-full border-[1.500px] border-[#d0d0ce] bg-white/60">
          <svg width="21" height="21" viewBox="0 0 24 24" fill="none" stroke="#c6c6c4" strokeWidth="1.500" strokeLinejoin="round">{c}</svg>
        </span>
      ))}
    </div>
  );
}

function Side() {
  const line = "flex h-[38.200px] shrink-0 items-center";
  const lines: [string, number][] = [["我们想要看雷诺", 223], ["数Re=100时的", 211], ["卡门涡街。相关", 223], ["参数如下：", 158]];
  const more: [string, number][] = [["流体入口速度：", 223], ["U=0.0037m/s", 206], ["圆柱直径：", 158], ["D=0.027 m", 168], ["流体运动粘度系", 221], ["数：", 63], ["ν=0.000001", 176]];
  return (
    <div className={"flex w-[236px] shrink-0 flex-col overflow-hidden bg-white pl-[13px] text-[31.500px] leading-none text-black " + SANS}>
      <div className="flex h-[352.500px] shrink-0 items-start pt-[3px] pl-[49px] text-[17px] text-[#dc2a1c]">
        <Fit w={170}>B站搜索：田东Joshua</Fit>
      </div>
      {lines.map(([t, w]) => <div key={t} className={line}><Fit w={w}>{t}</Fit></div>)}
      <div className="flex h-[71px] shrink-0 items-center font-['Liberation_Serif',serif] text-[30px] text-[#222]">
        <span className="pt-[5px]"><Fit w={35}><i>R</i>e</Fit></span>
        <span className="ml-[11px] pt-[5px]"><Fit w={20}>=</Fit></span>
        <span className="ml-[11px] flex w-[41px] flex-col items-center">
          <span className="flex h-[37px] items-start"><Fit w={38}><i>uD</i></Fit></span>
          <span className="h-px w-full bg-[#222]" />
          <span className="flex h-[31px] items-center pt-[7px]">ν</span>
        </span>
        <span className="ml-[11px] pt-[5px]"><Fit w={20}>=</Fit></span>
        <span className="ml-[12px] pt-[5px]"><Fit w={50}>100</Fit></span>
      </div>
      {more.map(([t, w]) => <div key={t} className={line}><Fit w={w}>{t}</Fit></div>)}
      <div className={line}><Fit w={70}>m<sup className="text-[20px]">2</sup>/s</Fit></div>
    </div>
  );
}

export default function App() {
  return (
    <div className="relative flex h-[954px] w-[1700px] flex-col overflow-hidden bg-[#fafbfb]">
      <div className="h-[3px] shrink-0 bg-[#f6f6f6]" />
      <div className="flex w-[1690px] flex-1 bg-white">
        <div className="flex h-[931px] w-[1454px] shrink-0 flex-col">
          <div className={"flex h-[26px] shrink-0 items-center pl-[4px] text-[12px] text-[#222] " + SANS}>
            <svg width="14" height="12" viewBox="0 0 14 12" className="-mt-1"><path d="M2 1h3L3.500 11h-3z" fill="#c8332f" /><path d="M6.500 1h3L8 11H5z" fill="#2f8a55" /><path d="M11 1h3l-1.500 10h-3z" fill="#2b4f8f" /></svg>
            <Fit w={79} className="-mt-[2px] ml-[5px]">ParaView 5.8.0</Fit>
          </div>
          <Menu />
          <ToolbarOne />
          <ToolbarTwo />
          <ToolbarThree />
          <div className="flex min-h-0 flex-1">
            <LeftDock />
            <div className="flex min-w-0 flex-1 flex-col bg-[#efece6]">
              <div className="flex h-[23px] shrink-0 items-end border-b border-[#c4c1bb]">
                <div className="-mb-px flex h-[22px] w-[100px] items-center rounded-t-sm border border-b-0 border-[#c4c1bb] bg-white pt-px pl-[9px]">
                  <span className="mr-[4px] size-[9px] border border-t-2 border-[#333]" />
                  <M>Layout #1</M>
                  <svg className="ml-[3px]" width="11" height="11" viewBox="0 0 11 11" fill="none" stroke="#555"><rect x=".5" y=".5" width="10" height="10" rx="1.500" /><path d="M3 3l5 5M8 3L3 8" strokeWidth="1.500" /></svg>
                </div>
                <div className="flex h-[20px] w-[28px] items-center justify-center border border-b-0 border-[#c4c1bb] bg-[#e6e3de] pt-px"><M>+</M></div>
              </div>
              <ViewTools />
              <div className="relative flex-1 overflow-hidden border-t-2 border-l-2 border-[#1f2bb0] bg-linear-to-b from-[#95d2ff] via-[#bfe8f3] to-[#e6fce5]">
                <Scene />
              </div>
            </div>
          </div>
        </div>
        <Side />
      </div>

      <div className="absolute top-[86px] left-[477px] h-[33px] w-[157px] rounded-[3px] border-[3px] border-[#ee3b22]" />
      <div className="absolute top-[792px] -left-1 h-[75px] w-[356px] rounded-[2px] border-[3px] border-[#ee3b22]" />

      <Note pos="top-[216px] left-[196px]" w={153}>左边为进口INLET</Note>
      <Note pos="top-[242px] left-[196px]" w={174}>右边为出口OUTLET</Note>
      <Note pos="top-[269px] left-[196px]" w={173}>上下面为壁面WALL</Note>
      <Note pos="top-[295px] left-[196px]" w={139}>前后面为empty</Note>
      <Note pos="top-[321px] left-[196px]" w={235}>中间有一个圆柱CYLINDER</Note>
      <Note pos="top-[162px] left-[922px]" w={133}>雷诺数Re=100</Note>
      <Note pos="top-[834px] left-[371px]" w={146}>X,Y,Z的取值范围</Note>
      <Note pos="top-[569px] left-[660px]" w={54}>INLET</Note>
      <Note pos="top-[339px] left-[1036px]" w={55}>WALL</Note>
      <Note pos="top-[621px] left-[935px]" w={96}>CYLINDER</Note>
      <Note pos="top-[825px] left-[1045px]" w={54}>WALL</Note>
      <Note pos="top-[565px] left-[1356px]" w={76}>OUTLET</Note>

      <div className={"absolute top-[50px] left-[1337px] text-[32px] leading-[36px] font-semibold text-white/90 [text-shadow:0_0_2px_#cfcfcf] " + SANS}>
        <Fit w={188}>田东Joshua</Fit>
      </div>
      <div className="absolute top-[32px] left-[1537px] skew-x-6 font-['Lato',sans-serif] text-[64px] leading-[58px] font-black text-[#efefef]">
        <Fit w={123}>bilibili</Fit>
      </div>

      <Controls />

      <div className="absolute top-[875px] left-[553px] flex h-[59px] w-[582px] items-center rounded-[2px] bg-[#5f6a66]/75 pt-[3px] pl-[7px]">
        <span className={"text-[41px] leading-none text-white [-webkit-text-stroke:0.6px_white] " + SANS}><Fit w={562}>然后z方向的话是就是前后板了</Fit></span>
        <span className="absolute top-[8px] right-[3px] font-['Liberation_Sans',sans-serif] text-[7px] leading-none text-white/50">AI</span>
      </div>

      <div className="absolute top-[367px] left-[1680px] h-[38px] w-[10px] rounded-l-[4px] bg-[#41464b]" />
      <svg className="absolute top-[834px] left-[1590px] drop-shadow-[0_1px_1.500px_rgba(0,0,0,0.4)]" width="68" height="62" viewBox="0 0 68 62" fill="none">
        <path d="M23 5l5 6M45 5l-5 6" stroke="#fff" strokeWidth="4.500" strokeLinecap="round" />
        <rect x="8" y="10" width="53" height="44" rx="11" fill="#fff" />
        <path d="M27 23v18q1 2 3 1l14-9q1-1 0-2l-14-9q-2-1-3 1z" stroke="#c4c4c4" strokeWidth="1.500" />
      </svg>
    </div>
  );
}
